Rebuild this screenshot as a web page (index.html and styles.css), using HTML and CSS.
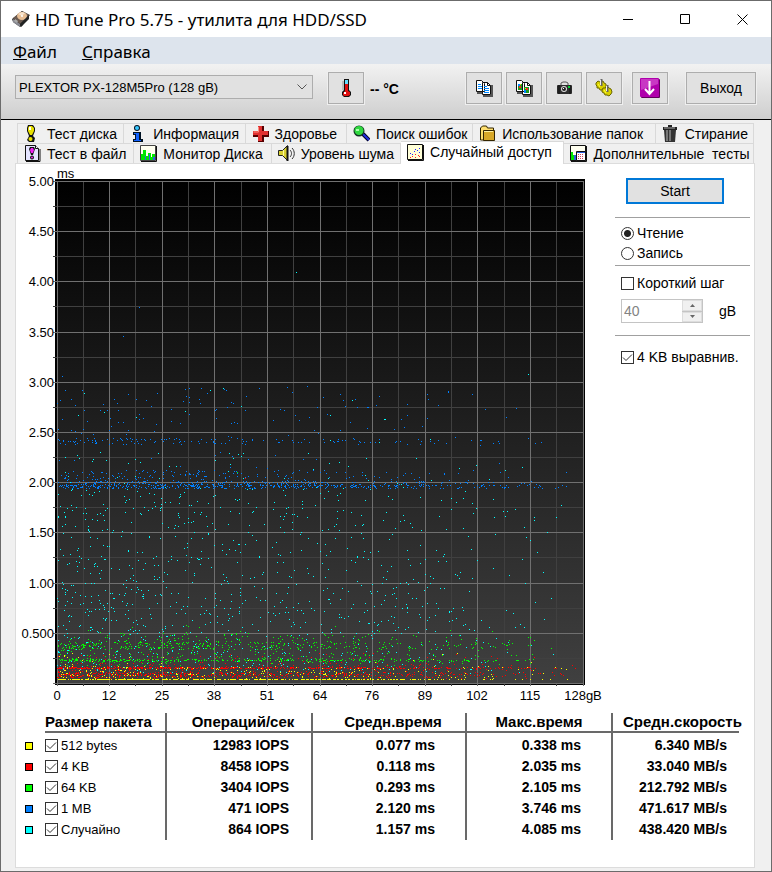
FILE: index.html
```html
<!DOCTYPE html>
<html lang="ru">
<head>
  <meta charset="UTF-8">
  <title>HD Tune Pro 5.75 - утилита для HDD/SSD</title>
  <link rel="stylesheet" href="styles.css">
</head>
<body>
  <div class="window">
    <header class="titlebar">
      <svg class="app-icon" width="20" height="18" viewBox="0 0 20 18">
        <path d="M1 9L11 1l8 4-8 11-2 1-7-5z" fill="#333"/>
        <path d="M2 8L11 1l7 4-9 9z" fill="#6b5a50"/>
        <path d="M2 9l7 5v3l-7-5z" fill="#8a8a92"/>
        <ellipse cx="11" cy="6" rx="5" ry="4" fill="#e6bd93"/>
        <path d="M7 4l4 2 3-3-3-1z" fill="#f8e3cb"/>
        <circle cx="11" cy="6" r="1" fill="#fff"/>
        <path d="M4 9l3 2-1 2-3-2z" fill="#aaa"/>
        <path d="M9 14l9-9v4l-8 8z" fill="#222"/>
      </svg>
      <h1>HD Tune Pro 5.75 - утилита для HDD/SSD</h1>
      <div class="window-buttons">
        <button type="button" aria-label="Свернуть"><svg width="11" height="11" viewBox="0 0 11 11"><path d="M0 5.5h10"/></svg></button>
        <button type="button" aria-label="Развернуть"><svg width="11" height="11" viewBox="0 0 11 11"><path d="M.5.5h9v9h-9z"/></svg></button>
        <button type="button" aria-label="Закрыть"><svg width="11" height="11" viewBox="0 0 11 11"><path d="M.5.5l10 10M10.5.5l-10 10"/></svg></button>
      </div>
    </header>

    <nav class="menubar">
      <a href="#file"><u>Ф</u>айл</a>
      <a href="#help"><u>С</u>правка</a>
    </nav>

    <div class="toolbar">
      <div class="drive">
        <select aria-label="Диск">
          <option>PLEXTOR PX-128M5Pro (128 gB)</option>
        </select>
        <svg width="10" height="6" viewBox="0 0 10 6"><path d="M.5.5L5 5 9.5.5" fill="none" stroke="#555"/></svg>
      </div>
      <button type="button" class="tool" aria-label="Температура">
        <svg width="10" height="18" viewBox="0 0 10 18">
          <path d="M3 0h5v11l2 2v3l-2 2H3l-2-2v-3l2-2z" fill="#111"/>
          <path d="M4 1h3v4H4z" fill="#6df"/>
          <path d="M4 5h3v7l2 1v3l-2 1H3l-1-1v-2l2-2z" fill="#e01010"/>
          <path d="M3 13h2v2H3z" fill="#fff"/>
          <path d="M2 2v9" stroke="#999"/>
        </svg>
      </button>
      <span class="temp">-- °C</span>
      <div class="tools">
        <button type="button" class="tool" aria-label="Копировать текст">
          <svg width="18" height="18" viewBox="0 0 18 18">
            <path d="M2 14h7M8 17h9V6" stroke="#555" stroke-width="2" fill="none"/>
            <path d="M1.5 1.5h5l3 3v8h-8zM7.5 3.5h5l3 3v9h-8z" fill="#fff" stroke="#111"/>
            <path d="M12.5 3.5v3h3" fill="none" stroke="#111"/>
            <path d="M3 5.5h3M3 7.5h4M3 9.5h4M9 7.5h3M9 9.5h5M9 11.5h5M9 13.5h5" stroke="#08f"/>
          </svg>
        </button>
        <button type="button" class="tool" aria-label="Копировать снимок">
          <svg width="18" height="18" viewBox="0 0 18 18">
            <path d="M2 14h7M8 17h9V6" stroke="#555" stroke-width="2" fill="none"/>
            <path d="M1.5 1.5h5l3 3v8h-8zM7.5 3.5h5l3 3v9h-8z" fill="#fff" stroke="#111"/>
            <path d="M12.5 3.5v3h3" fill="none" stroke="#111"/>
            <path d="M3 5h4v6H3zM9 8h5v6H9z" fill="#1a9a20"/>
            <path d="M4 7h2v2H4zM11 9h2v2h-2z" fill="#f22"/>
            <path d="M3 5h2v2H3zM9 11h2v3H9z" fill="#08f"/>
            <path d="M5 5h1v1H5zM10 9h1v1h-1z" fill="#fd0"/>
          </svg>
        </button>
        <button type="button" class="tool" aria-label="Сохранить снимок">
          <svg width="17" height="14" viewBox="0 0 17 14">
            <path d="M5 4V2l2-1h3l2 1v2" fill="none" stroke="#555"/>
            <rect x="1" y="4" width="15" height="9" rx="1" fill="#2c2c2c"/>
            <path d="M3 4v9M14 4v9" stroke="#111"/>
            <circle cx="8" cy="8" r="3" fill="#ddd"/>
            <circle cx="8" cy="8" r="2" fill="#222"/>
            <path d="M12 5h2v2h-2z" fill="#00d030"/>
            <path d="M7 7h1v1H7z" fill="#fff"/>
          </svg>
        </button>
        <button type="button" class="tool" aria-label="Настройки">
          <svg width="18" height="18" viewBox="0 0 18 18">
            <path d="M1 4l2-2 2 1 3-1 1 2 2 1v3l-2 2-1 1H5L4 9 2 9V7L1 6z" fill="#d8d000" stroke="#6a6600"/>
            <path d="M7 11l1-2 2 0 3-1 1 1 2 1 1 3-1 2-2 2-2-1-2 0-1-2-2-1z" fill="#d8d000" stroke="#6a6600"/>
            <path d="M6.5 0v7M12.5 6v7" stroke="#666" stroke-width="2"/>
            <path d="M5.5 1v5M11.5 7v5" stroke="#eee"/>
            <path d="M3 5l2 3M9 11l2 3" stroke="#ffff40"/>
          </svg>
        </button>
        <button type="button" class="tool tool-down" aria-label="Свернуть в трей">
          <svg width="20" height="20" viewBox="0 0 20 20">
            <rect x="1" y="1" width="19" height="19" rx="1" fill="#60005c"/>
            <rect width="19" height="19" rx="1" fill="#b000ac"/>
            <path d="M1 1h17v5L1 12z" fill="#c838c4"/>
            <path d="M9.5 3v12M5 11l4.5 5 4.5-5" fill="none" stroke="#fff" stroke-width="2"/>
          </svg>
        </button>
      </div>
      <button type="button" class="tool exit">Выход</button>
    </div>

    <main class="content">
      <div class="tabs">
        <div class="tab-row tab-row-top">
          <a class="tab" href="#benchmark">
            <svg width="17" height="17" viewBox="0 0 17 17"><path d="M4 0h5l2 3v3l-2 5H5L3 6V3z" fill="#111"/><path d="M5 1h3l2 2v3l-2 4H6L4 6V3z" fill="#e8e000"/><path d="M5 2h2v3H5z" fill="#fff"/><path d="M5 11h4l2 2-1 4H5l-2-2z" fill="#111"/><circle cx="6.5" cy="14" r="2" fill="#e8e000"/></svg>
            Тест диска</a>
          <a class="tab" href="#info">
            <svg width="17" height="17" viewBox="0 0 17 17"><circle cx="7" cy="3" r="3" fill="#012"/><circle cx="7" cy="3" r="2" fill="#38c8ff"/><path d="M3 7h8v7h2v3H3v-3h2v-4H3z" fill="#012"/><path d="M4 8h5v7h2v1H4v-1h2V9H4z" fill="#1060ff"/></svg>
            Информация</a>
          <a class="tab" href="#health">
            <svg width="17" height="17" viewBox="0 0 17 17"><path d="M6 1h6v5h5v6h-5v5H6v-5H1V6h5z" fill="#500"/><path d="M6 1h4v5h6v4h-6v6H6v-6H1V6h5z" fill="#e03030"/><path d="M6.5 2v5h-5" fill="none" stroke="#ff9080"/></svg>
            Здоровье</a>
          <a class="tab" href="#errors">
            <svg width="17" height="17" viewBox="0 0 17 17"><path d="M10 9l6 6" stroke="#002" stroke-width="4"/><path d="M10 9l6 6" stroke="#2030e0" stroke-width="2"/><circle cx="6" cy="6" r="5.5" fill="#132"/><circle cx="6" cy="5.5" r="4.5" fill="#30d840"/><path d="M3 4h3v2H3z" fill="#a8ffa8"/></svg>
            Поиск ошибок</a>
          <a class="tab" href="#folders">
            <svg width="17" height="17" viewBox="0 0 17 17"><path d="M1.5 15V3l2-2h4l1 2h6v12z" fill="#ffe070" stroke="#332500"/><path d="M4.5 5.5h11v10h-11z" fill="#d8a828" stroke="#332500"/><path d="M5 6.5h9" stroke="#fff0a0"/></svg>
            Использование папок</a>
          <a class="tab" href="#erase">
            <svg width="17" height="17" viewBox="0 0 17 17"><path d="M1 2h5V0h4v2h5v3H1z" fill="#222"/><path d="M2 5h12l-1 12H3z" fill="#333"/><path d="M5 5v11M8 5v11" stroke="#bbb"/><path d="M2 3h11" stroke="#aaa"/></svg>
            Стирание</a>
        </div>
        <div class="tab-row tab-row-bottom">
          <a class="tab" href="#file-test">
            <svg width="17" height="17" viewBox="0 0 17 17"><path d="M1.5.5h10l3 3v12h-13z" fill="#e4e4ff" stroke="#111"/><path d="M2 16.5h14V4" fill="none" stroke="#111"/><path d="M11.5.5v3h3" fill="#fff" stroke="#111"/><path d="M6 2h4l1 2-1 3-1 3H7L6 7 5 4z" fill="#111"/><path d="M7 3h2l1 2-1 3H7L6 5z" fill="#f020f0"/><circle cx="8" cy="12.5" r="2" fill="#111"/><circle cx="8" cy="12.5" r="1" fill="#f020f0"/></svg>
            Тест в файл</a>
          <a class="tab" href="#monitor">
            <svg width="17" height="17" viewBox="0 0 17 17"><path d="M.5.5h15v15H.5z" fill="#fffff0" stroke="#444"/><path d="M1 16.5h15.5V1" fill="none" stroke="#111"/><path d="M1 15V9h2V5h3v6h2V8h3v4h1V9h3v6z" fill="#00e800"/><path d="M5 15v-4h1v4zM9 15V9h1v6zM13 15v-3h2v3z" fill="#3060e0"/></svg>
            Монитор Диска</a>
          <a class="tab" href="#aam">
            <svg width="17" height="17" viewBox="0 0 17 17"><path d="M.5 5.5h4l5-5v15l-5-5h-4z" fill="#d8d030" stroke="#222"/><path d="M5.5 5v6" stroke="#fff8a0"/><path d="M9.5 1v15" stroke="#111" stroke-width="2"/><path d="M12 5c2 2 2 5 0 7M14 3c3 3 3 8 0 11" fill="none" stroke="#333"/></svg>
            Уровень шума</a>
          <a class="tab active" href="#random">
            <svg width="17" height="17" viewBox="0 0 17 17"><path d="M.5.5h15v15H.5z" fill="#ffffd8" stroke="#111"/><path d="M1 16.5h15.5V1" fill="none" stroke="#111"/><path d="M3 9h1v1H3zM5 10h1v1H5zM7 7h1v1H7zM8 5h1v1H8zM10 6h1v1h-1zM12 4h1v1h-1zM12 8h1v1h-1z" fill="#22f"/><path d="M3 13h1v1H3zM5 12h1v1H5zM8 13h1v1H8zM8 10h1v1H8zM11 11h1v1h-1zM12 12h1v1h-1z" fill="#f22"/></svg>
            Случайный доступ</a>
          <a class="tab" href="#extra">
            <svg width="17" height="17" viewBox="0 0 17 17"><path d="M.5.5h15v15H.5z" fill="#fffff0" stroke="#111"/><path d="M1 16.5h15.5V1" fill="none" stroke="#111"/><path d="M1 15V7h2v3h2v5z" fill="#00e800"/><path d="M4 10h2v5H4z" fill="#3060e0"/><path d="M6.5 6.5h9v9h-9z" fill="#fff" stroke="#111"/><path d="M7 7.5h8" stroke="#2858d8"/><path d="M8 9.5h6M8 11.5h6M8 13.5h6" stroke="#d04060" stroke-dasharray="1 1"/></svg>
            Дополнительные&nbsp; тесты</a>
        </div>
      </div>

      <section class="panel">
        <div class="upper">
          <svg class="chart" id="chart" viewBox="0 0 590 542" role="img" aria-label="Время доступа, ms">
            <defs>
              <linearGradient id="plot-bg" x1="0" y1="0" x2="0" y2="1">
                <stop offset="0" stop-color="#000"/>
                <stop offset="1" stop-color="#404040"/>
              </linearGradient>
            </defs>
            <rect x="39" y="15" width="530" height="506" fill="#000"/>
            <rect x="41" y="17" width="527" height="503" fill="url(#plot-bg)"/>
            <text x="41" y="14">ms</text>
          </svg>

          <form class="side">
            <button type="button" class="start">Start</button>
            <div class="group">
              <label class="option"><input type="radio" name="mode" checked>Чтение</label>
              <label class="option"><input type="radio" name="mode">Запись</label>
            </div>
            <div class="group group-step">
              <label class="option"><input type="checkbox">Короткий шаг</label>
              <div class="stroke">
                <div class="spinner">
                  <input type="number" id="stroke-size" value="40" disabled>
                  <div class="spin-buttons">
                    <button type="button" disabled aria-label="Больше"><svg width="5" height="3" viewBox="0 0 5 3"><path d="M0 3L2.5 0 5 3z"/></svg></button>
                    <button type="button" disabled aria-label="Меньше"><svg width="5" height="3" viewBox="0 0 5 3"><path d="M0 0l2.5 3L5 0z"/></svg></button>
                  </div>
                </div>
                <label for="stroke-size">gB</label>
              </div>
            </div>
            <div class="group group-align">
              <label class="option"><input type="checkbox" checked>4 KB выравнив.</label>
            </div>
          </form>
        </div>

        <table class="results">
          <colgroup>
            <col class="col-mark"><col class="col-size"><col class="col-iops"><col class="col-avg"><col class="col-max"><col class="col-speed">
          </colgroup>
          <thead>
            <tr>
              <td></td>
              <th>Размер пакета</th>
              <th>Операций/сек</th>
              <th>Средн.время</th>
              <th>Макс.время</th>
              <th>Средн.скорость</th>
            </tr>
          </thead>
          <tbody>
            <tr>
              <td><span class="mark yellow"></span></td>
              <td><label class="option"><input type="checkbox" checked>512 bytes</label></td>
              <td>12983 IOPS</td><td>0.077 ms</td><td>0.338 ms</td><td>6.340 MB/s</td>
            </tr>
            <tr>
              <td><span class="mark red"></span></td>
              <td><label class="option"><input type="checkbox" checked>4 KB</label></td>
              <td>8458 IOPS</td><td>0.118 ms</td><td>2.035 ms</td><td>33.040 MB/s</td>
            </tr>
            <tr>
              <td><span class="mark green"></span></td>
              <td><label class="option"><input type="checkbox" checked>64 KB</label></td>
              <td>3404 IOPS</td><td>0.293 ms</td><td>2.105 ms</td><td>212.792 MB/s</td>
            </tr>
            <tr>
              <td><span class="mark blue"></span></td>
              <td><label class="option"><input type="checkbox" checked>1 MB</label></td>
              <td>471 IOPS</td><td>2.120 ms</td><td>3.746 ms</td><td>471.617 MB/s</td>
            </tr>
            <tr>
              <td><span class="mark cyan"></span></td>
              <td><label class="option"><input type="checkbox" checked>Случайно</label></td>
              <td>864 IOPS</td><td>1.157 ms</td><td>4.085 ms</td><td>438.420 MB/s</td>
            </tr>
          </tbody>
        </table>
      </section>
    </main>
  </div>
  <script src="chart.js"></script>
</body>
</html>
```
FILE: styles.css
```css
* {
  box-sizing: border-box;
}
body {
  margin: 0;
  font-family: "Liberation Sans", Arial, sans-serif;
  font-size: 14px;
  color: #000;
  background: #f0f0f0;
}
a {
  color: inherit;
  text-decoration: none;
}
button {
  font: inherit;
  color: inherit;
  padding: 0;
}
.window {
  display: flex;
  flex-direction: column;
  min-height: 100vh;
  border: 1px solid #6b6b6b;
}

/* title and menu */
.titlebar {
  display: flex;
  align-items: center;
  height: 36px;
  padding-left: 10px;
  background: #fff;
}
.titlebar h1 {
  flex: 1;
  margin: 0 0 0 4px;
  font: 17px "Noto Sans", "Open Sans", sans-serif;
}
.window-buttons {
  display: flex;
}
.window-buttons button {
  display: grid;
  place-items: center;
  width: 57px;
  height: 36px;
  border: none;
  background: none;
}
.window-buttons path {
  fill: none;
  stroke: #000;
}
.menubar {
  display: flex;
  gap: 25px;
  height: 27px;
  padding: 0 12px;
  background: #dde4ed;
  font: 17px/29px "Noto Sans", "Open Sans", sans-serif;
}

/* toolbar */
.toolbar {
  display: flex;
  align-items: flex-start;
  height: 56px;
  padding: 8px 15px 0 14px;
  border-bottom: 1px solid #000;
  background: linear-gradient(#f2f2f2, #cecece);
}
.drive {
  display: grid;
  flex: 0 1 298px;
  align-items: center;
  margin: 3px 15px 0 0;
}
.drive select,
.drive svg {
  grid-area: 1 / 1;
}
.drive select {
  appearance: none;
  width: 100%;
  height: 24px;
  padding: 0 3px;
  border: 1px solid #adadad;
  border-radius: 0;
  background: #e1e1e1;
  font: 13px "Liberation Sans", Arial, sans-serif;
  color: #000;
}
.drive svg {
  justify-self: end;
  margin-right: 6px;
  pointer-events: none;
}
.tool {
  display: grid;
  place-items: center;
  width: 36px;
  height: 32px;
  border: 1px solid #adadad;
  background: #e1e1e1;
  box-shadow: 0 0 0 1px #efefef;
}
.temp {
  margin-left: 6px;
  font-weight: bold;
  line-height: 34px;
}
.tools {
  display: flex;
  gap: 4px;
  margin-left: auto;
}
.tool-down {
  margin-left: 6px;
}
.exit {
  width: 70px;
  margin-left: 18px;
}

/* tabs */
.content {
  flex: 1;
  display: flex;
  flex-direction: column;
  padding: 3px 16px 3px 14px;
}
.tabs {
  padding: 0 1px 0 2px;
}
.tab-row {
  display: grid;
  height: 20px;
}
.tab-row-top {
  grid-template-columns: 107fr 121fr 101fr 126fr 182fr 98fr;
}
.tab-row-bottom {
  grid-template-columns: 117fr 137fr 129fr 163fr 189fr;
}
.tab {
  display: flex;
  align-items: center;
  gap: 6px;
  min-width: 0;
  padding-left: 6px;
  border-top: 1px solid #d9d9d9;
  border-right: 1px solid #d9d9d9;
  background: #f0f0f0;
  white-space: nowrap;
}
.tab:first-child {
  border-left: 1px solid #d9d9d9;
}
.tab svg {
  flex: none;
}
.tab.active {
  z-index: 1;
  margin: -2px 0 -1px;
  padding-bottom: 2px;
  background: #fff;
}

/* panel */
.panel {
  flex: 1;
  border: 1px solid #dcdcdc;
  background: #fff;
}
.upper {
  display: flex;
  align-items: flex-start;
  gap: 9px;
  padding-right: 4px;
}
.chart {
  display: block;
  flex: 1;
  min-width: 0;
  font-size: 13px;
}
.chart rect,
.chart path {
  shape-rendering: crispEdges;
}
.chart .y-label {
  text-anchor: end;
}
.chart .x-label {
  text-anchor: middle;
}
.side {
  width: 135px;
  padding-top: 14px;
}
.start {
  display: block;
  width: 98px;
  height: 26px;
  margin: 0 0 13px 11px;
  border: 2px solid #0078d7;
  background: #e1e1e1;
}
.group {
  padding: 5px 0 2px 6px;
  border-top: 1px solid #a0a0a0;
}
.group-step {
  padding: 7px 0 12px 6px;
}
.group-align {
  padding-top: 11px;
}
.option {
  display: flex;
  align-items: center;
  gap: 3px;
  height: 20px;
  white-space: nowrap;
}
.option input {
  appearance: none;
  flex: none;
  width: 13px;
  height: 13px;
  margin: 0;
  border: 1px solid #333;
  background: #fff;
}
.option input[type="radio"] {
  border-radius: 50%;
}
.option input[type="radio"]:checked {
  background: radial-gradient(circle, #222 3px, #fff 4px);
}
.option input[type="checkbox"]:checked {
  background: #fff url("data:image/svg+xml,%3Csvg xmlns='http://www.w3.org/2000/svg' viewBox='0 0 11 11'%3E%3Cpath d='M1 5.5l3 3 6-6' fill='none' stroke='%23333'/%3E%3C/svg%3E");
}
.stroke {
  display: flex;
  align-items: center;
  gap: 16px;
  margin-top: 6px;
}
.spinner {
  display: flex;
  width: 82px;
  height: 24px;
  border: 1px solid #c4c4c4;
}
.spinner input {
  flex: 1;
  min-width: 0;
  appearance: textfield;
  padding: 0 2px;
  border: none;
  background: #fff;
  font: inherit;
  color: #838383;
}
.spin-buttons {
  display: grid;
  width: 20px;
  gap: 1px;
  background: #c4c4c4;
}
.spin-buttons button {
  display: grid;
  place-items: center;
  border: 1px solid #ddd;
  background: #f0f0f0;
}
.spin-buttons path {
  fill: #666;
}

/* results */
.results {
  width: calc(100% - 15px);
  margin: 7px 0 26px;
  table-layout: fixed;
  border-collapse: separate;
  border-spacing: 0;
}
.col-mark { width: 29px; }
.col-size { width: 122px; }
.col-iops { width: 146px; }
.col-avg { width: 154px; }
.col-max { width: 146px; }
.col-speed { width: 126px; }
.results th,
.results td {
  padding: 0;
  white-space: nowrap;
}
.results th {
  height: 20px;
  border-right: 2px solid #696969;
  border-bottom: 2px solid #696969;
  font-size: 15px;
  line-height: 18px;
}
.results th:nth-child(2) {
  text-align: left;
}
.results th:nth-child(3),
.results th:nth-child(4) {
  padding-left: 8px;
}
.results th:last-child {
  padding-left: 10px;
  text-align: left;
}
.results tbody td {
  height: 21px;
  padding-right: 30px;
  border-right: 2px solid #696969;
  font-weight: bold;
  line-height: 21px;
  text-align: right;
}
.results tbody tr:first-child td {
  height: 23px;
  padding-top: 2px;
}
.results tbody td:nth-child(1) {
  padding-right: 0;
  padding-left: 9px;
  border-right: none;
  text-align: left;
}
.results tbody td:nth-child(2) {
  padding-right: 0;
  font-size: 13px;
  font-weight: normal;
}
.results tbody td:nth-child(3) {
  padding-right: 22px;
}
.results tbody td:nth-child(6) {
  padding-right: 12px;
}
.results th:last-child,
.results tbody td:last-child {
  border-right: none;
}
.mark {
  display: block;
  width: 8px;
  height: 8px;
  border: 1px solid #000;
}
.yellow { background: #ff0; }
.red { background: #f00; }
.green { background: #0f0; }
.blue { background: #0080ff; }
.cyan { background: #0ff; }
```
FILE: chart.js
```js
const svg = document.getElementById('chart');

// Plot area inside the viewBox
const LEFT = 41;
const BOTTOM = 519;
const WIDTH = 526;
const HEIGHT = 502;

function add(name, attrs, text) {
  const el = document.createElementNS('http://www.w3.org/2000/svg', name);
  for (const key in attrs) el.setAttribute(key, attrs[key]);
  if (text) el.textContent = text;
  svg.appendChild(el);
}

// Grid, 20 steps each way, every second line is a major one
const minor = [];
const major = [];
for (let i = 0; i <= 20; i++) {
  const x = LEFT + Math.floor(WIDTH * i / 20);
  const y = BOTTOM - Math.round(HEIGHT * i / 20);
  const list = i % 2 ? minor : major;
  list.push(`M${x} 17h1v505h-1z`);
  list.push(`M37 ${y}h531v1h-531z`);
}
add('path', { d: minor.join(''), fill: '#404040' });
add('path', { d: major.join(''), fill: '#707070' });

// Axis labels
const yLabels = ['0.500', '1.00', '1.50', '2.00', '2.50', '3.00', '3.50', '4.00', '4.50', '5.00'];
yLabels.forEach((label, i) => {
  add('text', { class: 'y-label', x: 38, y: BOTTOM + 5 - Math.round(HEIGHT * (i + 1) / 10) }, label);
});
const xLabels = ['0', '12', '25', '38', '51', '64', '76', '89', '102', '115', '128gB'];
xLabels.forEach((label, i) => {
  add('text', { class: 'x-label', x: LEFT + Math.floor(WIDTH * i / 10), y: 536 }, label);
});

// Fixed seed so that the plot is the same on every load
let seed = 575;
function rand() {
  seed = (seed * 1664525 + 1013904223) >>> 0;
  return seed / 4294967296;
}

function range(min, max) {
  return min + rand() * (max - min);
}

// bands: [number of points, lowest ms, highest ms]
function series(color, bands, extra) {
  const d = [];
  const dot = (x, ms) => {
    const px = Math.round(LEFT + x * (WIDTH - 2));
    const py = Math.round(BOTTOM - ms * HEIGHT / 5);
    d.push(`M${px} ${py}h1v1h-1z`);
  };
  bands.forEach(([count, min, max]) => {
    for (let i = 0; i < count; i++) {
      dot(1 - Math.pow(rand(), 0.55), range(min, max));
    }
  });
  (extra || []).forEach(([gb, ms]) => dot(gb / 128, ms));
  add('path', { d: d.join(''), fill: color });
}

series('#00ffff', [[850, 0.1, 1.95], [150, 0.1, 0.9], [55, 1.9, 2.3], [14, 2.3, 2.95]],
  [[58.3, 4.09], [115, 3.08], [72, 2.82]]);
series('#0080ff', [[340, 1.94, 1.98], [220, 1.96, 2.01], [190, 2.0, 2.12], [140, 2.38, 2.44], [110, 2.44, 2.95], [20, 2.1, 2.4]],
  [[20, 3.75], [1.2, 3.06], [61, 2.96], [16, 3.46], [2, 2.92]]);
series('#00ff00', [[280, 0.22, 0.24], [240, 0.34, 0.41], [360, 0.18, 0.5], [12, 0.5, 0.58]], [[44, 2.1]]);
series('#ff0000', [[420, 0.145, 0.16], [420, 0.06, 0.11], [260, 0.05, 0.2], [40, 0.2, 0.3]], [[46, 2.04]]);
series('#ffff00', [[420, 0.04, 0.045], [260, 0.05, 0.17], [24, 0.17, 0.3]]);
```
